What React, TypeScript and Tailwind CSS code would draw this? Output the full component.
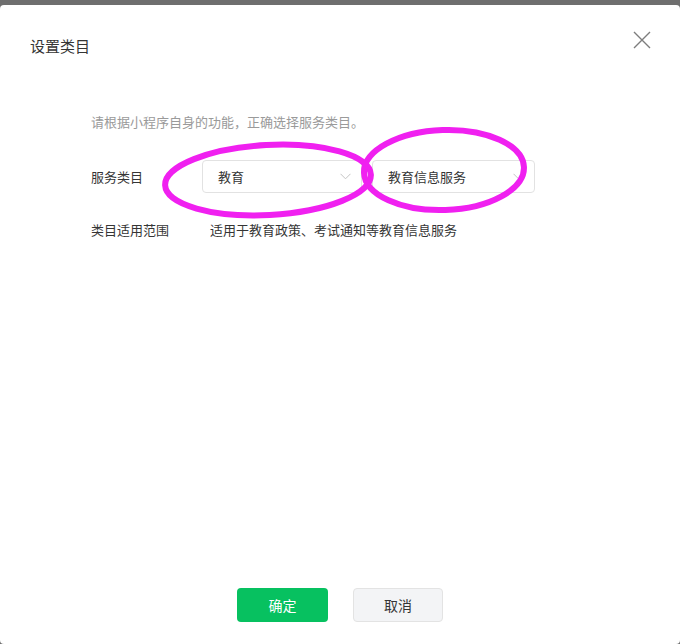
const font = { fontFamily: '"Noto Sans CJK SC", "Noto Sans", sans-serif' };

function Chevron() {
  return (
    <svg width="11" height="7" viewBox="0 0 11 7" fill="none" className="shrink-0">
      <path d="M0.5 0.8 L5.5 5.8 L10.5 0.8" stroke="#c4c4c4" strokeWidth="1" />
    </svg>
  );
}

function Select({ value, width }: { value: string; width: string }) {
  return (
    <div
      className={`flex h-[33px] items-center justify-between rounded-[4px] border border-[#e2e2e2] bg-white pl-[15px] pr-[10px] text-[13px] text-[#353535] ${width}`}
    >
      <span>{value}</span>
      <Chevron />
    </div>
  );
}

export default function App() {
  return (
    <div className="relative h-[644px] w-[680px] overflow-hidden bg-[#6f6f6f] pt-[5px]" style={font}>
      <div className="flex h-[639px] flex-col rounded-[4px] bg-white">
        <div className="flex items-start justify-between pl-[30px] pr-[29px]">
          <h1 className="pt-[31px] text-[15px] leading-[20px] font-normal text-[#353535]">设置类目</h1>
          <button type="button" className="mt-[26px]" aria-label="关闭">
            <svg width="18" height="18" viewBox="0 0 18 18">
              <path d="M1 1 L17 17 M17 1 L1 17" stroke="#7d7d7d" strokeWidth="1.4" />
            </svg>
          </button>
        </div>

        <div className="pl-[91px] pt-[56px] text-[13px] leading-[20px] text-[#353535]">
          <p className="text-[#9a9a9a]">请根据小程序自身的功能，正确选择服务类目。</p>
          <div className="mt-[28px] flex items-center">
            <span className="w-[111px]">服务类目</span>
            <div className="flex gap-[10px]">
              <Select value="教育" width="w-[160px]" />
              <Select value="教育信息服务" width="w-[163px]" />
            </div>
          </div>
          <div className="mt-[27px] flex">
            <span className="w-[119px]">类目适用范围</span>
            <span>适用于教育政策、考试通知等教育信息服务</span>
          </div>
        </div>

        <div className="mt-auto flex justify-center gap-[25px] pb-[22px]">
          <button
            type="button"
            className="h-[34px] w-[91px] rounded-[4px] bg-[#07c160] text-[14px] text-white"
          >
            确定
          </button>
          <button
            type="button"
            className="h-[34px] w-[90px] rounded-[4px] border border-[#e3e3e3] bg-[#f3f4f6] text-[14px] text-[#353535]"
          >
            取消
          </button>
        </div>
      </div>

      <svg
        className="pointer-events-none absolute left-0 top-0"
        width="680"
        height="644"
        viewBox="0 0 680 644"
      >
        <ellipse cx="268" cy="180" rx="103" ry="35" fill="none" stroke="#f020f0" strokeWidth="6" transform="rotate(-3 268 180)" />
        <ellipse cx="444" cy="170" rx="80" ry="40" fill="none" stroke="#f020f0" strokeWidth="6" transform="rotate(-2 444 170)" />
      </svg>
    </div>
  );
}
